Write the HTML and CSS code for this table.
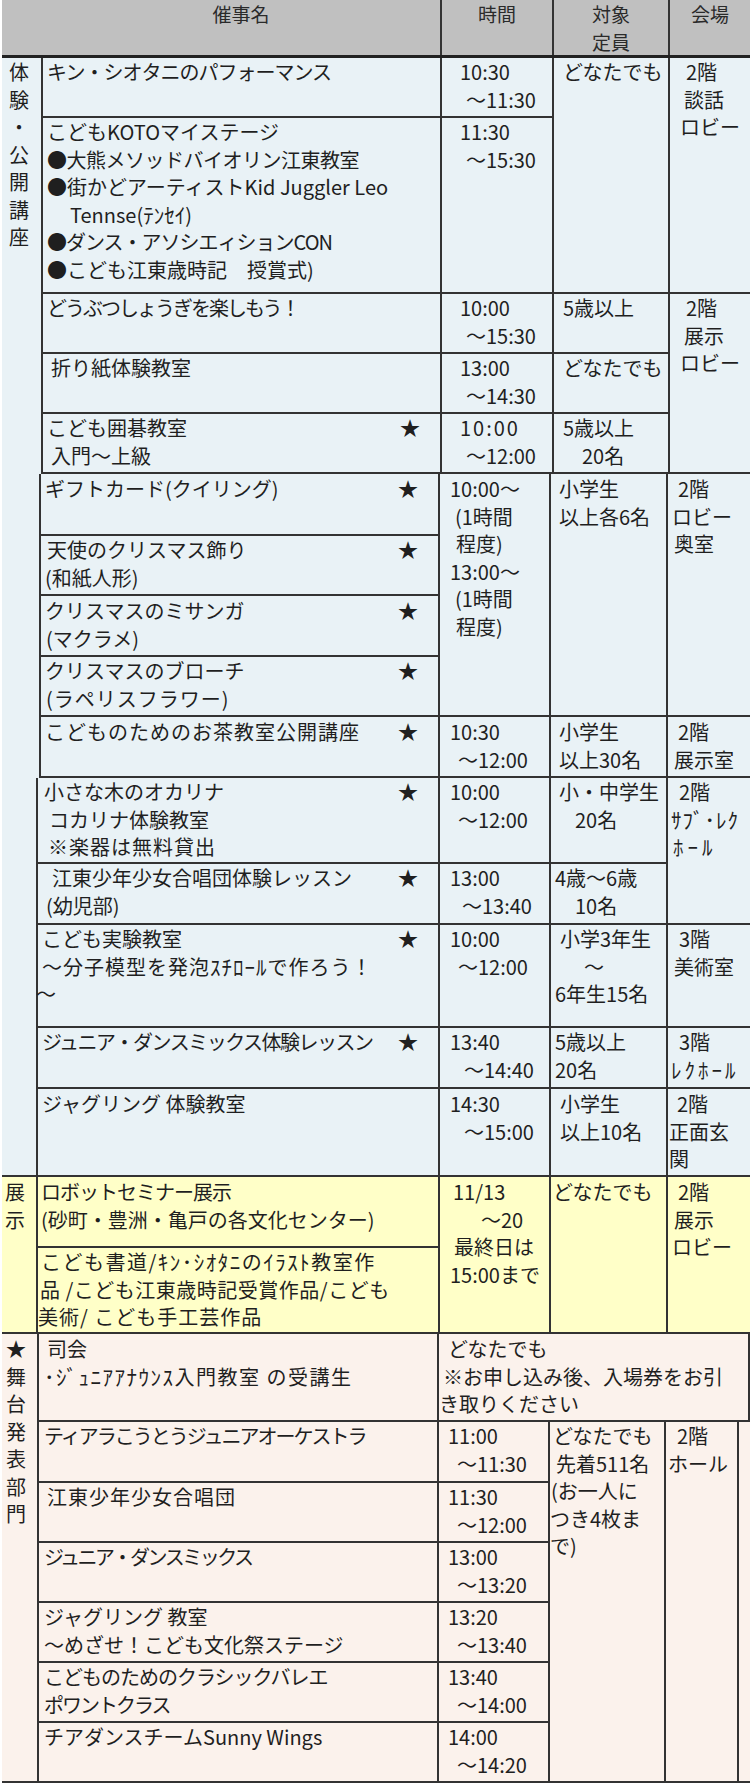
FILE: index.html
```html
<!DOCTYPE html>
<html lang="ja">
<head>
<meta charset="utf-8">
<title>こども文化祭 催事一覧</title>
<link rel="stylesheet" href="styles.css">
</head>
<body>
<div class="sheet">
  <div class="head">
    <div class="h hn"><div class="hi">催事名</div></div>
    <div class="h"><div class="hi">時間</div></div>
    <div class="h"><div class="hi">対象<br>定員</div></div>
    <div class="h hv"><div class="hi">会場</div></div>
  </div>

  <section class="sec s1">
    <div class="cat"><span>体</span><span>験</span><span>・</span><span>公</span><span>開</span><span>講</span><span>座</span></div>
    <div class="blocks">
      <div class="blk b1">
        <div class="c nm"><span class="ln ls-1">キン・シオタニのパフォーマンス</span></div>
        <div class="c tm"><span class="ln">10:30</span><span class="ln p6">～11:30</span></div>
        <div class="c tg r2"><span class="ln">どなたでも</span></div>
        <div class="c vn r2"><span class="ln p6">2階</span><span class="ln p4">談話</span><span class="ln">ロビー</span></div>

        <div class="c nm"><span class="ln">こどもKOTOマイステージ</span><span class="ln ls-05">●大熊メソッドバイオリン江東教室</span><span class="ln">●街かどアーティストKid Juggler Leo</span><span class="ln p23">Tennse(<span class="hw">ﾃﾝｾｲ</span>)</span><span class="ln ls-1">●ダンス・アソシエィションCON</span><span class="ln">●こども江東歳時記　授賞式)</span></div>
        <div class="c tm"><span class="ln">11:30</span><span class="ln p6">～15:30</span></div>

        <div class="c nm"><span class="ln ls-2">どうぶつしょうぎを楽しもう！</span></div>
        <div class="c tm"><span class="ln">10:00</span><span class="ln p6">～15:30</span></div>
        <div class="c tg"><span class="ln">5歳以上</span></div>
        <div class="c vn r3"><span class="ln p6">2階</span><span class="ln p4">展示</span><span class="ln">ロビー</span></div>

        <div class="c nm"><span class="ln p4">折り紙体験教室</span></div>
        <div class="c tm"><span class="ln">13:00</span><span class="ln p6">～14:30</span></div>
        <div class="c tg"><span class="ln">どなたでも</span></div>

        <div class="c nm"><span class="ln"><span class="star">★</span>こども囲碁教室</span><span class="ln p4">入門～上級</span></div>
        <div class="c tm"><span class="ln ls2">10:00</span><span class="ln p6">～12:00</span></div>
        <div class="c tg"><span class="ln">5歳以上</span><span class="ln p19">20名</span></div>
      </div>

      <div class="blk b2">
        <div class="c nm pt1"><span class="ln"><span class="star">★</span>ギフトカード(クイリング)</span></div>
        <div class="c tm pt1 r4"><span class="ln">10:00～</span><span class="ln p5">(1時間</span><span class="ln p6">程度)</span><span class="ln">13:00～</span><span class="ln p5">(1時間</span><span class="ln p6">程度)</span></div>
        <div class="c tg pt1 r4"><span class="ln">小学生</span><span class="ln">以上各6名</span></div>
        <div class="c vn pt1 r4"><span class="ln p9">2階</span><span class="ln p3">ロビー</span><span class="ln p5">奥室</span></div>

        <div class="c nm"><span class="ln p2"><span class="star">★</span>天使のクリスマス飾り</span><span class="ln">(和紙人形)</span></div>

        <div class="c nm pt1"><span class="ln"><span class="star">★</span>クリスマスのミサンガ</span><span class="ln p1">(マクラメ)</span></div>

        <div class="c nm"><span class="ln"><span class="star">★</span>クリスマスのブローチ</span><span class="ln p1 ls1">(ラペリスフラワー)</span></div>

        <div class="c nm pt1"><span class="ln ls1"><span class="star">★</span>こどものためのお茶教室公開講座</span></div>
        <div class="c tm pt1"><span class="ln">10:30</span><span class="ln p8">～12:00</span></div>
        <div class="c tg pt1"><span class="ln">小学生</span><span class="ln">以上30名</span></div>
        <div class="c vn pt1"><span class="ln p9">2階</span><span class="ln p5">展示室</span></div>
      </div>

      <div class="blk b3">
        <div class="c nm"><span class="ln p2"><span class="star">★</span>小さな木のオカリナ</span><span class="ln p7">コカリナ体験教室</span><span class="ln p6 ls1">※楽器は無料貸出</span></div>
        <div class="c tm"><span class="ln">10:00</span><span class="ln p8">～12:00</span></div>
        <div class="c tg"><span class="ln p4">小・中学生</span><span class="ln p20">20名</span></div>
        <div class="c vn r2"><span class="ln p10">2階</span><span class="ln p2 ls1 hw">ｻﾌﾞ･ﾚｸ</span><span class="ln p4 ls4 hw">ﾎｰﾙ</span></div>

        <div class="c nm"><span class="ln p10"><span class="star">★</span>江東少年少女合唱団体験レッスン</span><span class="ln p4">(幼児部)</span></div>
        <div class="c tm"><span class="ln">13:00</span><span class="ln p12">～13:40</span></div>
        <div class="c tg"><span class="ln">4歳～6歳</span><span class="ln p20">10名</span></div>

        <div class="c nm"><span class="ln"><span class="star">★</span>こども実験教室</span><span class="ln ls1">～分子模型を発泡<span class="hw">ｽﾁﾛｰﾙ</span>で作ろう！</span><span class="ln n6">～</span></div>
        <div class="c tm"><span class="ln">10:00</span><span class="ln p8">～12:00</span></div>
        <div class="c tg"><span class="ln p5">小学3年生</span><span class="ln p29">～</span><span class="ln">6年生15名</span></div>
        <div class="c vn"><span class="ln p10">3階</span><span class="ln p5">美術室</span></div>

        <div class="c nm"><span class="ln ls-15"><span class="star">★</span>ジュニア・ダンスミックス体験レッスン</span></div>
        <div class="c tm"><span class="ln">13:40</span><span class="ln p14">～14:40</span></div>
        <div class="c tg"><span class="ln">5歳以上</span><span class="ln">20名</span></div>
        <div class="c vn"><span class="ln p10">3階</span><span class="ln p2 ls3 hw">ﾚｸﾎｰﾙ</span></div>

        <div class="c nm pt1 last"><span class="ln">ジャグリング 体験教室</span></div>
        <div class="c tm pt1 last"><span class="ln">14:30</span><span class="ln p14">～15:00</span></div>
        <div class="c tg pt1 last"><span class="ln p5">小学生</span><span class="ln p5">以上10名</span></div>
        <div class="c vn pt1 last"><span class="ln p8">2階</span><span class="ln">正面玄</span><span class="ln">関</span></div>
      </div>
    </div>
  </section>

  <section class="sec s2">
    <div class="cat"><span>展</span><span>示</span></div>
    <div class="blocks">
      <div class="blk b4">
        <div class="c nm pt1"><span class="ln p3 ls-1">ロボットセミナー展示</span><span class="ln p3">(砂町・豊洲・亀戸の各文化センター)</span></div>
        <div class="c tm pt1 r2 last"><span class="ln p3">11/13</span><span class="ln p31">～20</span><span class="ln p4">最終日は</span><span class="ln">15:00まで</span></div>
        <div class="c tg pt1 r2 last"><span class="ln">どなたでも</span></div>
        <div class="c vn pt1 r2 last"><span class="ln p9">2階</span><span class="ln p5">展示</span><span class="ln p3">ロビー</span></div>

        <div class="c nm last"><span class="ln p3 ls15">こども書道/<span class="hw">ｷﾝ･ｼｵﾀﾆ</span>の<span class="hw">ｲﾗｽﾄ</span>教室作</span><span class="ln p2 ls05">品 /こども江東歳時記受賞作品/こども</span><span class="ln ls1">美術/ こども手工芸作品</span></div>
      </div>
    </div>
  </section>

  <section class="sec s3">
    <div class="cat"><span>★</span><span>舞</span><span>台</span><span>発</span><span>表</span><span>部</span><span>門</span></div>
    <div class="blocks">
      <div class="blk b5">
        <div class="c nm pt1"><span class="ln p3">司会</span><span class="ln ls15"><span class="hw">･ｼﾞｭﾆｱｱﾅｳﾝｽ</span>入門教室 の受講生</span></div>
        <div class="c wide pt1"><span class="ln p9">どなたでも</span><span class="ln p4">※お申し込み後、入場券をお引</span><span class="ln">き取りください</span></div>

        <div class="c nm"><span class="ln ls-2">ティアラこうとうジュニアオーケストラ</span></div>
        <div class="c tm"><span class="ln">11:00</span><span class="ln p9">～11:30</span></div>
        <div class="c tg r6 last"><span class="ln p3">どなたでも</span><span class="ln p6">先着511名</span><span class="ln p1">(お一人に</span><span class="ln">つき4枚ま</span><span class="ln">で)</span></div>
        <div class="c vn vr r6 last"><span class="ln p11">2階</span><span class="ln p2">ホール</span></div>
        <div class="fill r6"></div>

        <div class="c nm"><span class="ln p3 ls1">江東少年少女合唱団</span></div>
        <div class="c tm"><span class="ln">11:30</span><span class="ln p9">～12:00</span></div>

        <div class="c nm"><span class="ln ls-25">ジュニア・ダンスミックス</span></div>
        <div class="c tm"><span class="ln">13:00</span><span class="ln p9">～13:20</span></div>

        <div class="c nm"><span class="ln">ジャグリング 教室</span><span class="ln">～めざせ！こども文化祭ステージ</span></div>
        <div class="c tm"><span class="ln">13:20</span><span class="ln p9">～13:40</span></div>

        <div class="c nm"><span class="ln ls-1">こどものためのクラシックバレエ</span><span class="ln ls-2">ポワントクラス</span></div>
        <div class="c tm"><span class="ln">13:40</span><span class="ln p9">～14:00</span></div>

        <div class="c nm last"><span class="ln">チアダンスチームSunny Wings</span></div>
        <div class="c tm last"><span class="ln">14:00</span><span class="ln p9">～14:20</span></div>
      </div>
    </div>
  </section>
</div>
</body>
</html>
```

FILE: styles.css
```css
html, body {
  margin: 0;
  padding: 0;
}

body {
  width: 750px;
  overflow: hidden;
  background: #ffffff;
  color: #1f1f1f;
  font-family: "Noto Sans CJK JP", "Noto Sans", sans-serif;
  font-size: 20px;
  line-height: 27.5px;
}

.sheet {
  margin-left: 2px;
  width: 748px;
}

/* header */
.head {
  display: grid;
  grid-template-columns: 440px 112px 116px 80px;
  height: 58px;
  box-sizing: border-box;
  background: #c0c0c0;
  border-bottom: 3px solid #222;
}

.h {
  box-sizing: border-box;
  border-right: 2px solid #333;
  text-align: center;
  font-size: 19px;
  line-height: 27.5px;
  color: #2a2a2a;
  overflow: hidden;
}

.hn {
  padding-left: 40px;
}

.hv {
  border-right: none;
}

/* sections */
.sec {
  display: flex;
  border-bottom: 2px solid #333;
}

.s1 { background: #e9f2f6; }
.s2 { background: #ffffc8; }
.s3 { background: #fbf2ec; }

.cat {
  flex: none;
  width: 34px;
  box-sizing: border-box;
}

.cat span {
  display: block;
}

.s1 .cat { padding-left: 7px; }
.s2 .cat { padding-left: 3px; padding-top: 1px; }
.s3 .cat { width: 35px; padding-left: 4px; padding-top: 1px; }

.blocks {
  flex: 1;
  min-width: 0;
  display: flex;
  flex-direction: column;
}

.blk {
  display: grid;
  border-left: 2px solid #333;
}

.b1 {
  margin-left: 5px;
  grid-template-columns: 399px 112px 116px 80px;
  grid-template-rows: 60px 176px 60px 60px 60px;
}

.b2 {
  margin-left: 3px;
  grid-template-columns: 399px 111px 117px 82px;
  grid-template-rows: 62px 60px 61px 60px 61px;
}

.b3 {
  grid-template-columns: 402px 111px 117px 82px;
  grid-template-rows: 86px 61px 103px 61px 86px;
}

.b4 {
  grid-template-columns: 402px 111px 117px 82px;
  grid-template-rows: 71px 84px;
}

.b5 {
  grid-template-columns: 400px 111px 116px 73px 11px;
  grid-template-rows: 88px 61px 60px 60px 60px 60px 58px;
}

/* cells */
.c {
  box-sizing: border-box;
  min-width: 0;
  border-right: 2px solid #333;
  border-bottom: 2px solid #333;
}

.c.vn { border-right: none; }
.c.vn.vr { border-right: 2px solid #333; }
.c.last { border-bottom: none; }
.c.pt1 { padding-top: 1px; }

.r2 { grid-row: span 2; }
.r3 { grid-row: span 3; }
.r4 { grid-row: span 4; }
.r6 { grid-row: span 6; }
.wide { grid-column: span 4; }

.nm { padding-left: 4px; }
.b4 .nm { padding-left: 0; }
.b5 .nm { padding-left: 5px; }

.tm { padding-left: 10px; }
.b1 .tm { padding-left: 18px; }
.b5 .tm { padding-left: 9px; }

.tg { padding-left: 4px; }
.b1 .tg { padding-left: 9px; }
.b2 .tg { padding-left: 8px; }
.b4 .tg { padding-left: 2px; }
.b5 .tg { padding-left: 0; }

.vn { padding-left: 1px; }
.b1 .vn { padding-left: 10px; }
.b5 .vn { padding-left: 0; }

.wide { padding-left: 0; }

.ln {
  display: block;
  white-space: nowrap;
}

/* half-width katakana: a little larger, as in the original */
.hw {
  font-size: 21px;
}

.star {
  float: right;
  margin-right: 20px;
  letter-spacing: 0;
}

/* line indents */
.p1 { padding-left: 1px; }
.p2 { padding-left: 2px; }
.p3 { padding-left: 3px; }
.p4 { padding-left: 4px; }
.p5 { padding-left: 5px; }
.p6 { padding-left: 6px; }
.p7 { padding-left: 7px; }
.p8 { padding-left: 8px; }
.p9 { padding-left: 9px; }
.p10 { padding-left: 10px; }
.p11 { padding-left: 11px; }
.p12 { padding-left: 12px; }
.p14 { padding-left: 14px; }
.p19 { padding-left: 19px; }
.p20 { padding-left: 20px; }
.p23 { padding-left: 23px; }
.p29 { padding-left: 29px; }
.p31 { padding-left: 31px; }
.n6 { margin-left: -6px; }

/* letter spacing tweaks */
.ls-25 { letter-spacing: -2.5px; }
.ls-2 { letter-spacing: -2px; }
.ls-15 { letter-spacing: -1.5px; }
.ls-1 { letter-spacing: -1px; }
.ls-05 { letter-spacing: -0.5px; }
.ls05 { letter-spacing: 0.5px; }
.ls1 { letter-spacing: 1px; }
.ls15 { letter-spacing: 1.5px; }
.ls2 { letter-spacing: 2px; }
.ls3 { letter-spacing: 3px; }
.ls4 { letter-spacing: 4px; }
```
